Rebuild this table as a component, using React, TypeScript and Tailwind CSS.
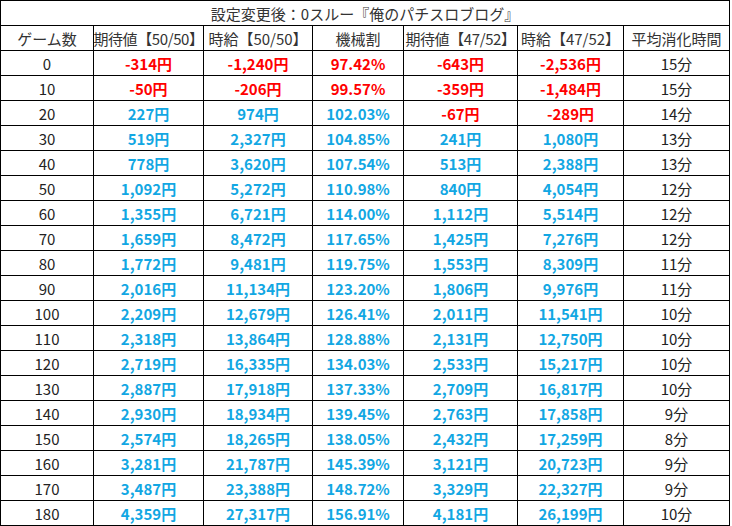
import React from "react";

type Row = [number, string, string, string, string, string, string];

const rows: Row[] = [
  [0, "-314円", "-1,240円", "97.42%", "-643円", "-2,536円", "15分"],
  [10, "-50円", "-206円", "99.57%", "-359円", "-1,484円", "15分"],
  [20, "227円", "974円", "102.03%", "-67円", "-289円", "14分"],
  [30, "519円", "2,327円", "104.85%", "241円", "1,080円", "13分"],
  [40, "778円", "3,620円", "107.54%", "513円", "2,388円", "13分"],
  [50, "1,092円", "5,272円", "110.98%", "840円", "4,054円", "12分"],
  [60, "1,355円", "6,721円", "114.00%", "1,112円", "5,514円", "12分"],
  [70, "1,659円", "8,472円", "117.65%", "1,425円", "7,276円", "12分"],
  [80, "1,772円", "9,481円", "119.75%", "1,553円", "8,309円", "11分"],
  [90, "2,016円", "11,134円", "123.20%", "1,806円", "9,976円", "11分"],
  [100, "2,209円", "12,679円", "126.41%", "2,011円", "11,541円", "10分"],
  [110, "2,318円", "13,864円", "128.88%", "2,131円", "12,750円", "10分"],
  [120, "2,719円", "16,335円", "134.03%", "2,533円", "15,217円", "10分"],
  [130, "2,887円", "17,918円", "137.33%", "2,709円", "16,817円", "10分"],
  [140, "2,930円", "18,934円", "139.45%", "2,763円", "17,858円", "9分"],
  [150, "2,574円", "18,265円", "138.05%", "2,432円", "17,259円", "8分"],
  [160, "3,281円", "21,787円", "145.39%", "3,121円", "20,723円", "9分"],
  [170, "3,487円", "23,388円", "148.72%", "3,329円", "22,327円", "9分"],
  [180, "4,359円", "27,317円", "156.91%", "4,181円", "26,199円", "10分"],
];

const headers = ["ゲーム数", "期待値【50/50】", "時給【50/50】", "機械割", "期待値【47/52】", "時給【47/52】", "平均消化時間"];

const cell = "flex h-6 items-center justify-center overflow-hidden whitespace-nowrap bg-white";

// negative money or a rate under 100% is shown in red
const isLoss = (v: string) => v.startsWith("-") || (v.endsWith("%") && parseFloat(v) < 100);

const ValueCell = ({ value }: { value: string }) => (
  <div className={`${cell} font-bold ${isLoss(value) ? "text-[#ff0000]" : "text-[#12a7e3]"}`}>{value}</div>
);

export default function App() {
  return (
    <div className="w-[732px] bg-white" style={{ fontFamily: '"Noto Sans CJK JP", "Noto Sans", sans-serif' }}>
      <div className="grid w-[730px] grid-cols-[92px_109px_108px_90px_113px_105px_105px] gap-px bg-black p-px text-[15px] leading-none">
        <div className={`${cell} col-span-7 text-[#333333]`}>設定変更後：0スルー『俺のパチスロブログ』</div>
        {headers.map((h) => (
          <div key={h} className={`${cell} text-[#333333] ${h.startsWith("期待値") ? "tracking-[-0.4px]" : ""}`}>
            {h}
          </div>
        ))}
        {rows.map((r) => (
          <React.Fragment key={r[0]}>
            <div className={`${cell} text-[#222222]`}>{r[0]}</div>
            <ValueCell value={r[1]} />
            <ValueCell value={r[2]} />
            <ValueCell value={r[3]} />
            <ValueCell value={r[4]} />
            <ValueCell value={r[5]} />
            <div className={`${cell} text-[#222222]`}>{r[6]}</div>
          </React.Fragment>
        ))}
      </div>
    </div>
  );
}
